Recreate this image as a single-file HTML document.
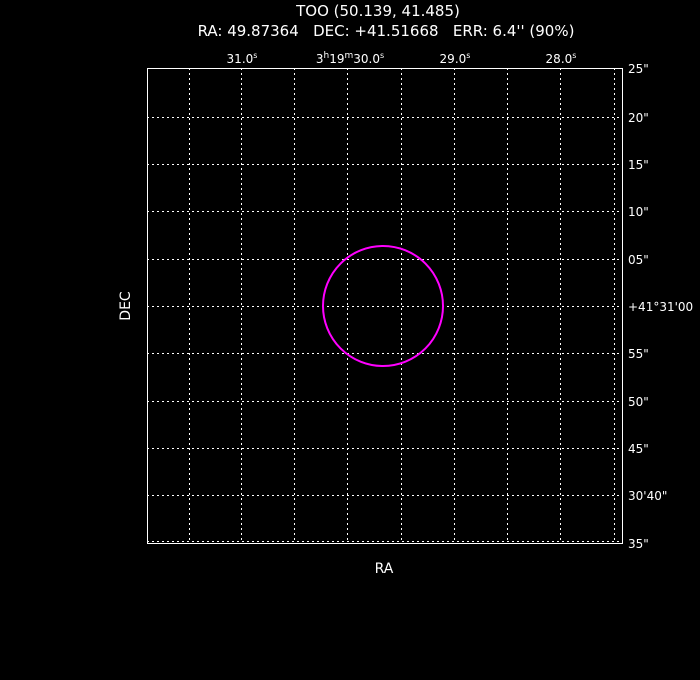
<!DOCTYPE html>
<html><head><style>
html,body{margin:0;padding:0;background:#000;width:700px;height:680px;overflow:hidden}
svg text{font-family:"DejaVu Sans","Liberation Sans",sans-serif;fill:#fff;font-size:14px;white-space:pre}
</style></head><body>
<svg width="700" height="680" xmlns="http://www.w3.org/2000/svg" xml:space="preserve">
<text x="378" y="16" text-anchor="middle" style="font-size:15px">TOO (50.139, 41.485)</text>
<text x="386" y="36" text-anchor="middle" style="font-size:15px">RA: 49.87364   DEC: +41.51668   ERR: 6.4'' (90%)</text>
<text x="242" y="63" text-anchor="middle" style="font-size:12px">31.0<tspan dy="-5" style="font-size:8px">s</tspan></text>
<text x="350" y="63" text-anchor="middle" style="font-size:12px">3<tspan dy="-5" style="font-size:9px">h</tspan><tspan dy="5">19</tspan><tspan dy="-5" style="font-size:9px">m</tspan><tspan dy="5">30.0</tspan><tspan dy="-5" style="font-size:8px">s</tspan></text>
<text x="455" y="63" text-anchor="middle" style="font-size:12px">29.0<tspan dy="-5" style="font-size:8px">s</tspan></text>
<text x="561" y="63" text-anchor="middle" style="font-size:12px">28.0<tspan dy="-5" style="font-size:8px">s</tspan></text>
<g stroke="#fff" stroke-width="1" stroke-dasharray="2,3" fill="none">
<path d="M189.5 68V543M241.5 68V543M294.5 68V543M347.5 68V543M401.5 68V543M454.5 68V543M507.5 68V543M560.5 68V543M614.5 68V543"/>
<path d="M147 117.5H622M147 164.5H622M147 211.5H622M147 259.5H622M147 306.5H622M147 353.5H622M147 401.5H622M147 448.5H622M147 495.5H622M147 541.5H622"/>
</g>
<rect x="147.5" y="68.5" width="475" height="475" stroke="#fff" fill="none"/>
<circle cx="383" cy="306" r="60" stroke="#ff00ff" stroke-width="2" fill="none"/>
<text x="628" y="73" style="font-size:12px">25"</text>
<text x="628" y="122" style="font-size:12px">20"</text>
<text x="628" y="169" style="font-size:12px">15"</text>
<text x="628" y="216" style="font-size:12px">10"</text>
<text x="628" y="264" style="font-size:12px">05"</text>
<text x="628" y="311" style="font-size:12px">+41°31'00</text>
<text x="628" y="358" style="font-size:12px">55"</text>
<text x="628" y="406" style="font-size:12px">50"</text>
<text x="628" y="453" style="font-size:12px">45"</text>
<text x="628" y="500" style="font-size:12px">30'40"</text>
<text x="628" y="548" style="font-size:12px">35"</text>
<text x="384" y="573" text-anchor="middle">RA</text>
<text transform="translate(130,306) rotate(-90)" text-anchor="middle">DEC</text>
</svg>
</body></html>
